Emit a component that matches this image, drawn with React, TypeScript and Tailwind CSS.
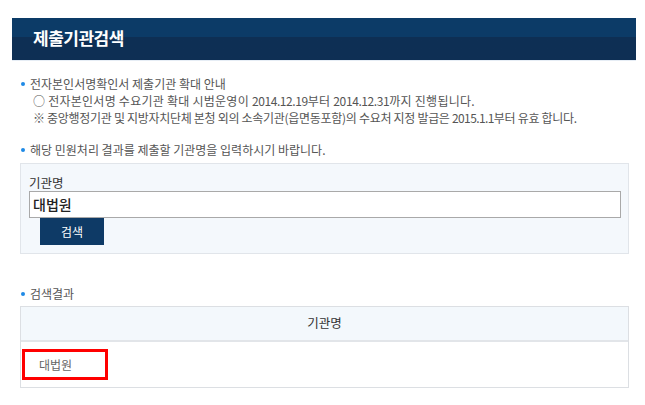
import React from "react";

const font = { fontFamily: '"Noto Sans CJK KR", "Noto Sans", sans-serif' };

function Bullet({ children }: { children: React.ReactNode }) {
  return (
    <div className="flex items-center gap-[5px] pl-[21px] h-[17px]">
      <span className="w-[4px] h-[4px] rounded-full bg-[#1e8ae6] shrink-0" />
      <span>{children}</span>
    </div>
  );
}

export default function App() {
  return (
    <div className="w-[645px] h-[405px] bg-white text-[12px] text-[#555] tracking-[0px]" style={font}>
      <div className="pt-[18px] pl-[12px] pr-[9px]">
        <div className="h-[43px] bg-gradient-to-b from-[#0c3b67] from-45% to-[#0e2f54] to-45% flex items-center pl-[21px] border-b border-[#e6edf5]">
          <span className="text-white text-[17px] font-bold tracking-[-0.5px] -mt-[2px]">제출기관검색</span>
        </div>
      </div>

      <div className="mt-[14px]">
        <Bullet>전자본인서명확인서 제출기관 확대 안내</Bullet>
        <div className="pl-[33px] h-[17px] leading-[17px] tracking-[0.25px]">○ 전자본인서명 수요기관 확대 시범운영이 <span className="tracking-[-0.4px]">2014.12.19</span>부터 <span className="tracking-[-0.4px]">2014.12.31</span>까지 진행됩니다.</div>
        <div className="pl-[33px] h-[17px] leading-[17px] tracking-[-0.3px]">※ 중앙행정기관 및 지방자치단체 본청 외의 소속기관(읍면동포함)의 수요처 지정 발급은 <span className="tracking-[-0.6px]">2015.1.1</span>부터 유효 합니다.</div>
        <div className="mt-[15px]">
          <Bullet>해당 민원처리 결과를 제출할 기관명을 입력하시기 바랍니다.</Bullet>
        </div>
      </div>

      <div className="ml-[20px] w-[609px] h-[91px] mt-[5px] bg-[#f4f8fc] border border-[#e1e5ea] pl-[8px] pt-[10px]">
        <div className="text-[12.5px] text-[#333] leading-[17px]">기관명</div>
        <div className="w-[592px] h-[27px] bg-white border border-[#a9a9a9] flex items-center pl-[3px] text-[14px] text-[#222] font-medium">대법원</div>
        <div className="ml-[11px] w-[64px] h-[27px] bg-[#0e3a66] text-white text-[12px] flex items-center justify-center">검색</div>
      </div>

      <div className="mt-[31px]">
        <Bullet>검색결과</Bullet>
      </div>

      <div className="ml-[20px] w-[609px] mt-[4px] border border-[#dcdfe3]">
        <div className="h-[35px] bg-[#f3f8fc] flex items-center justify-center border-b-2 border-[#e2e5e9] text-[12.5px] text-[#333]">기관명</div>
        <div className="h-[45px] flex items-center pl-[1px]">
          <div className="w-[86px] h-[31px] border-[3px] border-[#f00] flex items-center pl-[14px] text-[12px] text-[#666]">대법원</div>
        </div>
      </div>
    </div>
  );
}
